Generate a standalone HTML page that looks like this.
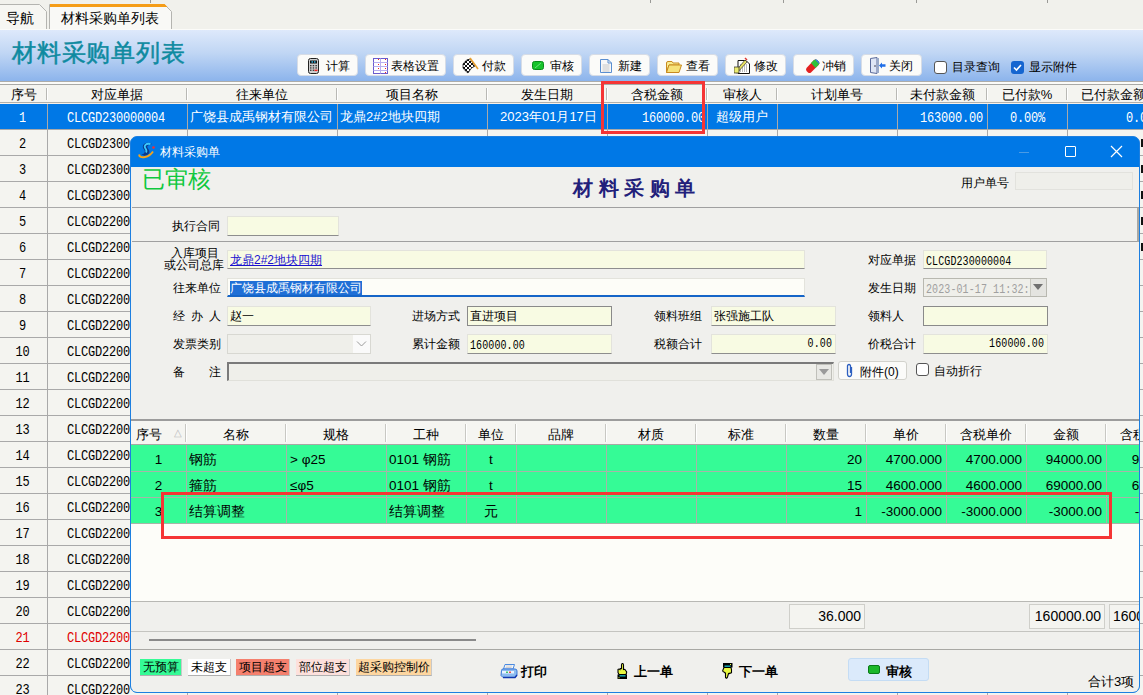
<!DOCTYPE html><html><head><meta charset="utf-8"><style>
*{margin:0;padding:0;box-sizing:border-box}
html,body{width:1143px;height:695px;overflow:hidden;background:#f4f4f0;font-family:"Liberation Sans",sans-serif;font-size:12px;color:#000}
.ab{position:absolute}
.t{position:absolute;white-space:nowrap;line-height:1}
.mono{font-family:"Liberation Mono",monospace}
.sim{position:absolute;white-space:nowrap;line-height:1;font-family:"Liberation Mono",monospace;font-size:12px;letter-spacing:-0.2px;transform:scaleY(1.2);transform-origin:0 0}
.btn{position:absolute;top:54px;height:22px;background:#fbfbf9;border:1px solid #d6dce6;border-radius:4px;font-size:13px;line-height:20px;white-space:nowrap}
.hd{position:absolute;top:84px;height:20px;background:#f4f4f0;font-size:13px;line-height:20px;text-align:center;border-right:1px solid #c9c9c4}
.vl{position:absolute;width:1px;background:#a9a9a9}
.hl{position:absolute;height:1px;background:#a9a9a9}
.inp{position:absolute;background:#f8fbe3;border:1px solid #e3e3dc;border-bottom:1px solid #8e8e8e;font-size:12px;line-height:18px;padding-left:2px;white-space:nowrap;overflow:hidden}
.lbl{position:absolute;font-size:12px;line-height:1;white-space:nowrap}
.gh{position:absolute;top:421px;height:24px;background:#f4f4f0;font-size:13px;line-height:24px;text-align:center}
.gc{position:absolute;font-size:13.5px;line-height:26px;white-space:nowrap;overflow:hidden}
</style></head><body>
<div class="ab" style="left:0;top:0;width:1143px;height:29px;background:#f1f1ec"></div><svg class="ab" style="left:0;top:0" width="180" height="29"><path d="M-1 4.5 H39.5 L46.5 11.5 V29 H-1 Z" fill="#f6f6f2"/><path d="M-1 4.5 H39.5 L46.5 11.5 V29" fill="none" stroke="#b4b4b0" stroke-width="1"/><path d="M49.5 29 V4.5 H164.5 L171.5 11.5 V29 Z" fill="#f9f9f6"/><path d="M49.5 29 V4.5 H164.5 L171.5 11.5 V29" fill="none" stroke="#b4b4b0" stroke-width="1"/><path d="M50 4 H164.5 L167.5 7 H50 Z" fill="#f59d18"/></svg><div class="t" style="left:6px;top:11px;font-size:14px">导航</div><div class="ab" style="left:150px;top:0;width:1px;height:3px;background:#9a9a96"></div><div class="ab" style="left:650px;top:0;width:1px;height:3px;background:#9a9a96"></div><div class="ab" style="left:783px;top:0;width:1px;height:3px;background:#9a9a96"></div><div class="ab" style="left:916px;top:0;width:1px;height:3px;background:#9a9a96"></div><div class="ab" style="left:1047px;top:0;width:1px;height:3px;background:#9a9a96"></div><div class="t" style="left:61px;top:11px;font-size:14px">材料采购单列表</div><div class="ab" style="left:0;top:29px;width:1143px;height:1px;background:#fbfbf8"></div><div class="ab" style="left:0;top:30px;width:1143px;height:51px;background:linear-gradient(#dee9fb,#c0d6f4 45%,#8cb4ec)"></div><div class="ab" style="left:0;top:81px;width:1143px;height:1px;background:#acacaa"></div><div class="ab" style="left:0;top:82px;width:1143px;height:2px;background:#fbfbf9"></div><div class="ab" style="left:0;top:84px;width:1143px;height:1px;background:#a9a9a6"></div><div class="ab" style="left:0;top:85px;width:1143px;height:17px;background:#f4f4f0"></div><div class="ab" style="left:0;top:102px;width:1143px;height:1px;background:#b0b0ac"></div><div class="ab" style="left:0;top:103px;width:1143px;height:1px;background:#f8f0e8"></div><div class="t" style="left:12px;top:41px;font-family:'Liberation Serif',serif;font-size:24px;color:#0e8aa0;font-weight:normal;-webkit-text-stroke:0.5px #0e8aa0;letter-spacing:0.8px">材料采购单列表</div><div class="btn" style="left:297px;width:61px"></div><div class="btn" style="left:365px;width:81px"></div><div class="btn" style="left:453px;width:61px"></div><div class="btn" style="left:521px;width:61px"></div><div class="btn" style="left:589px;width:61px"></div><div class="btn" style="left:657px;width:61px"></div><div class="btn" style="left:725px;width:61px"></div><div class="btn" style="left:793px;width:61px"></div><div class="btn" style="left:861px;width:61px"></div><div class="t" style="left:326px;top:60px;font-size:12px">计算</div><div class="t" style="left:391px;top:60px;font-size:12px">表格设置</div><div class="t" style="left:482px;top:60px;font-size:12px">付款</div><div class="t" style="left:550px;top:60px;font-size:12px">审核</div><div class="t" style="left:618px;top:60px;font-size:12px">新建</div><div class="t" style="left:686px;top:60px;font-size:12px">查看</div><div class="t" style="left:754px;top:60px;font-size:12px">修改</div><div class="t" style="left:822px;top:60px;font-size:12px">冲销</div><div class="t" style="left:889px;top:60px;font-size:12px">关闭</div><svg class="ab" style="left:308px;top:58px" width="11" height="16" viewBox="0 0 11 16"><rect x="0.5" y="0.5" width="10" height="15" rx="2" fill="#cfcfcf" stroke="#222"/><rect x="2" y="2.5" width="7" height="3" fill="#111"/><rect x="3.5" y="3.3" width="1.5" height="1.3" fill="#3cf"/><rect x="6" y="3.3" width="1.5" height="1.3" fill="#3cf"/><g fill="#333"><rect x="2" y="7" width="1.5" height="1.3"/><rect x="4.7" y="7" width="1.5" height="1.3"/><rect x="7.4" y="7" width="1.5" height="1.3"/><rect x="2" y="9.3" width="1.5" height="1.3"/><rect x="4.7" y="9.3" width="1.5" height="1.3"/><rect x="7.4" y="9.3" width="1.5" height="1.3"/><rect x="2" y="11.6" width="1.5" height="1.3"/><rect x="4.7" y="11.6" width="1.5" height="1.3"/></g><rect x="6.5" y="11.6" width="3" height="1.5" fill="#e22"/></svg><svg class="ab" style="left:373px;top:58px" width="15" height="16" viewBox="0 0 15 16"><rect x="0.5" y="0.5" width="14" height="15" fill="#fff" stroke="#6a5acd"/><path d="M7.5 0.5 V15.5 M0.5 4.5 H14.5 M0.5 8.5 H14.5 M0.5 12.5 H14.5" stroke="#b8b0f0" stroke-width="1"/><g fill="#e22"><rect x="5" y="1" width="1" height="1"/><rect x="12" y="1" width="1" height="1"/><rect x="5" y="6" width="1" height="1"/><rect x="12" y="6" width="1" height="1"/><rect x="5" y="10" width="1" height="1"/><rect x="12" y="10" width="1" height="1"/><rect x="12" y="14" width="1" height="1"/></g></svg><svg class="ab" style="left:461px;top:57px" width="18" height="18" viewBox="0 0 18 18"><defs><clipPath id="fc"><path d="M2 7 Q5 2 9 2 L14 9 Q10 10 7 16 Q4 14 2 11 Z"/></clipPath></defs><path d="M2 7 Q5 2 9 2 L14 9 Q10 10 7 16 Q4 14 2 11 Z" fill="#fff" stroke="#222" stroke-width="0.8"/><g clip-path="url(#fc)" fill="#111"><rect x="0" y="0" width="2" height="2"/><rect x="0" y="4" width="2" height="2"/><rect x="0" y="8" width="2" height="2"/><rect x="0" y="12" width="2" height="2"/><rect x="0" y="16" width="2" height="2"/><rect x="2" y="2" width="2" height="2"/><rect x="2" y="6" width="2" height="2"/><rect x="2" y="10" width="2" height="2"/><rect x="2" y="14" width="2" height="2"/><rect x="4" y="0" width="2" height="2"/><rect x="4" y="4" width="2" height="2"/><rect x="4" y="8" width="2" height="2"/><rect x="4" y="12" width="2" height="2"/><rect x="4" y="16" width="2" height="2"/><rect x="6" y="2" width="2" height="2"/><rect x="6" y="6" width="2" height="2"/><rect x="6" y="10" width="2" height="2"/><rect x="6" y="14" width="2" height="2"/><rect x="8" y="0" width="2" height="2"/><rect x="8" y="4" width="2" height="2"/><rect x="8" y="8" width="2" height="2"/><rect x="8" y="12" width="2" height="2"/><rect x="8" y="16" width="2" height="2"/><rect x="10" y="2" width="2" height="2"/><rect x="10" y="6" width="2" height="2"/><rect x="10" y="10" width="2" height="2"/><rect x="10" y="14" width="2" height="2"/><rect x="12" y="0" width="2" height="2"/><rect x="12" y="4" width="2" height="2"/><rect x="12" y="8" width="2" height="2"/><rect x="12" y="12" width="2" height="2"/><rect x="12" y="16" width="2" height="2"/><rect x="14" y="2" width="2" height="2"/><rect x="14" y="6" width="2" height="2"/><rect x="14" y="10" width="2" height="2"/><rect x="14" y="14" width="2" height="2"/><rect x="16" y="0" width="2" height="2"/><rect x="16" y="4" width="2" height="2"/><rect x="16" y="8" width="2" height="2"/><rect x="16" y="12" width="2" height="2"/><rect x="16" y="16" width="2" height="2"/></g><path d="M9 1 L17 12" stroke="#e8a030" stroke-width="1.6"/></svg><svg class="ab" style="left:532px;top:61px" width="12" height="9" viewBox="0 0 12 9"><rect x="0.5" y="0.5" width="11" height="8" rx="2" fill="#16c32a" stroke="#0a8a1a"/><path d="M3 7 L9 2" stroke="#6ee07a" stroke-width="1"/></svg><svg class="ab" style="left:600px;top:59px" width="12" height="14" viewBox="0 0 12 14"><path d="M0.5 0.5 H8 L11.5 4 V13.5 H0.5 Z" fill="#f8f8f8" stroke="#5a8ed0"/><path d="M8 0.5 V4 H11.5" fill="none" stroke="#5a8ed0"/><path d="M2.5 6 H9.5 M2.5 8 H9.5 M2.5 10 H9.5 M2.5 12 H9.5" stroke="#c8c8c8"/></svg><svg class="ab" style="left:666px;top:61px" width="16" height="12" viewBox="0 0 16 12"><path d="M0.5 2 Q0.5 0.5 2 0.5 H6 L7 2 H13 V4 H3 L0.5 11.5 Z" fill="#f8ec90" stroke="#c88a20"/><path d="M0.5 11.5 L3 4 H15.5 L13 11.5 Z" fill="#f6e27a" stroke="#c88a20"/></svg><svg class="ab" style="left:734px;top:57px" width="16" height="17" viewBox="0 0 16 17"><path d="M4 3.5 H12 L15.5 7 V16.5 H4 Z" fill="#fff" stroke="#111"/><path d="M6 8 H13 M6 10 H13 M6 12 H13 M6 14 H13" stroke="#777" stroke-dasharray="1 1"/><path d="M1 15 L11 3 L13 5 L3 16 Z" fill="#e8e060" stroke="#333" stroke-width="0.7"/><rect x="0" y="10" width="5" height="6" fill="#ecec70" stroke="#222" stroke-width="0.7"/><path d="M11 1 L13 3" stroke="#d33" stroke-width="1.5"/></svg><svg class="ab" style="left:805px;top:58px" width="15" height="16" viewBox="0 0 15 16"><path d="M1.5 10 L9 2 Q10.5 0.8 12 2 L14 4 Q15 5.5 13.5 7 L6 14.5 Q4.5 15.5 3 14.5 L1.5 13 Q0.5 11.5 1.5 10 Z" fill="#e32020"/><path d="M6 5 L9 2 Q10.5 0.8 12 2 L14 4 Q15 5.5 13.5 7 L10.5 10 Z" fill="#2fc03a"/><path d="M10 1.5 Q10.5 0.8 12 1.8 L14.2 4 Q14.8 5 14 6 Z" fill="#3a7ae0"/></svg><svg class="ab" style="left:870px;top:57px" width="16" height="17" viewBox="0 0 16 17"><path d="M0.5 1.5 L7 0.5 V16.5 L0.5 15.5 Z" fill="#dfe6f5" stroke="#5a6a9a"/><rect x="7" y="1" width="2" height="15" fill="#9aaac8"/><path d="M9 8.5 L12 5.5 V7.3 H15.5 V9.7 H12 V11.5 Z" fill="#1e6ee8"/><circle cx="5" cy="9" r="0.8" fill="#334"/></svg><div class="ab" style="left:934px;top:61px;width:13px;height:13px;border:1px solid #555;border-radius:3px;background:#fff"></div><div class="t" style="left:952px;top:61px;font-size:12px">目录查询</div><div class="ab" style="left:1011px;top:61px;width:13px;height:13px;border-radius:3px;background:#1565d0"></div><svg class="ab" style="left:1011px;top:61px" width="13" height="13"><path d="M3 6.5 L5.5 9 L10 4" stroke="#fff" stroke-width="1.6" fill="none"/></svg><div class="t" style="left:1029px;top:61px;font-size:12px">显示附件</div><div class="t" style="left:0px;top:88px;width:47px;text-align:center;font-size:13px">序号</div><div class="t" style="left:47px;top:88px;width:140px;text-align:center;font-size:13px">对应单据</div><div class="ab" style="left:46px;top:88px;width:1px;height:12px;background:#b8b8b4"></div><div class="ab" style="left:47px;top:88px;width:1px;height:12px;background:#fff"></div><div class="t" style="left:187px;top:88px;width:150px;text-align:center;font-size:13px">往来单位</div><div class="ab" style="left:186px;top:88px;width:1px;height:12px;background:#b8b8b4"></div><div class="ab" style="left:187px;top:88px;width:1px;height:12px;background:#fff"></div><div class="t" style="left:337px;top:88px;width:150px;text-align:center;font-size:13px">项目名称</div><div class="ab" style="left:336px;top:88px;width:1px;height:12px;background:#b8b8b4"></div><div class="ab" style="left:337px;top:88px;width:1px;height:12px;background:#fff"></div><div class="t" style="left:487px;top:88px;width:120px;text-align:center;font-size:13px">发生日期</div><div class="ab" style="left:486px;top:88px;width:1px;height:12px;background:#b8b8b4"></div><div class="ab" style="left:487px;top:88px;width:1px;height:12px;background:#fff"></div><div class="t" style="left:607px;top:88px;width:100px;text-align:center;font-size:13px">含税金额</div><div class="ab" style="left:606px;top:88px;width:1px;height:12px;background:#b8b8b4"></div><div class="ab" style="left:607px;top:88px;width:1px;height:12px;background:#fff"></div><div class="t" style="left:707px;top:88px;width:70px;text-align:center;font-size:13px">审核人</div><div class="ab" style="left:706px;top:88px;width:1px;height:12px;background:#b8b8b4"></div><div class="ab" style="left:707px;top:88px;width:1px;height:12px;background:#fff"></div><div class="t" style="left:777px;top:88px;width:120px;text-align:center;font-size:13px">计划单号</div><div class="ab" style="left:776px;top:88px;width:1px;height:12px;background:#b8b8b4"></div><div class="ab" style="left:777px;top:88px;width:1px;height:12px;background:#fff"></div><div class="t" style="left:897px;top:88px;width:90px;text-align:center;font-size:13px">未付款金额</div><div class="ab" style="left:896px;top:88px;width:1px;height:12px;background:#b8b8b4"></div><div class="ab" style="left:897px;top:88px;width:1px;height:12px;background:#fff"></div><div class="t" style="left:987px;top:88px;width:80px;text-align:center;font-size:13px">已付款%</div><div class="ab" style="left:986px;top:88px;width:1px;height:12px;background:#b8b8b4"></div><div class="ab" style="left:987px;top:88px;width:1px;height:12px;background:#fff"></div><div class="t" style="left:1067px;top:88px;width:93px;text-align:center;font-size:13px">已付款金额</div><div class="ab" style="left:1066px;top:88px;width:1px;height:12px;background:#b8b8b4"></div><div class="ab" style="left:1067px;top:88px;width:1px;height:12px;background:#fff"></div><div class="ab" style="left:0;top:104px;width:1143px;height:25px;background:#0078e6"></div><div class="hl" style="left:0;top:129px;width:1143px"></div><div class="hl" style="left:0;top:155px;width:1143px"></div><div class="hl" style="left:0;top:181px;width:1143px"></div><div class="hl" style="left:0;top:207px;width:1143px"></div><div class="hl" style="left:0;top:233px;width:1143px"></div><div class="hl" style="left:0;top:259px;width:1143px"></div><div class="hl" style="left:0;top:285px;width:1143px"></div><div class="hl" style="left:0;top:311px;width:1143px"></div><div class="hl" style="left:0;top:337px;width:1143px"></div><div class="hl" style="left:0;top:363px;width:1143px"></div><div class="hl" style="left:0;top:389px;width:1143px"></div><div class="hl" style="left:0;top:415px;width:1143px"></div><div class="hl" style="left:0;top:441px;width:1143px"></div><div class="hl" style="left:0;top:467px;width:1143px"></div><div class="hl" style="left:0;top:493px;width:1143px"></div><div class="hl" style="left:0;top:519px;width:1143px"></div><div class="hl" style="left:0;top:545px;width:1143px"></div><div class="hl" style="left:0;top:571px;width:1143px"></div><div class="hl" style="left:0;top:597px;width:1143px"></div><div class="hl" style="left:0;top:623px;width:1143px"></div><div class="hl" style="left:0;top:649px;width:1143px"></div><div class="hl" style="left:0;top:675px;width:1143px"></div><div class="hl" style="left:0;top:701px;width:1143px"></div><div class="vl" style="left:47px;top:104px;height:591px"></div><div class="vl" style="left:187px;top:104px;height:591px"></div><div class="vl" style="left:337px;top:104px;height:591px"></div><div class="vl" style="left:487px;top:104px;height:591px"></div><div class="vl" style="left:607px;top:104px;height:591px"></div><div class="vl" style="left:707px;top:104px;height:591px"></div><div class="vl" style="left:777px;top:104px;height:591px"></div><div class="vl" style="left:897px;top:104px;height:591px"></div><div class="vl" style="left:987px;top:104px;height:591px"></div><div class="vl" style="left:1067px;top:104px;height:591px"></div><div class="sim" style="left:-1px;top:111px;width:47px;text-align:center;color:#fff">1</div><div class="sim" style="left:67px;top:111px;color:#fff">CLCGD230000004</div><div class="sim" style="left:-1px;top:137px;width:47px;text-align:center;color:#000">2</div><div class="sim" style="left:67px;top:137px;color:#000">CLCGD2300</div><div class="sim" style="left:-1px;top:163px;width:47px;text-align:center;color:#000">3</div><div class="sim" style="left:67px;top:163px;color:#000">CLCGD2300</div><div class="sim" style="left:-1px;top:189px;width:47px;text-align:center;color:#000">4</div><div class="sim" style="left:67px;top:189px;color:#000">CLCGD2300</div><div class="sim" style="left:-1px;top:215px;width:47px;text-align:center;color:#000">5</div><div class="sim" style="left:67px;top:215px;color:#000">CLCGD2200</div><div class="sim" style="left:-1px;top:241px;width:47px;text-align:center;color:#000">6</div><div class="sim" style="left:67px;top:241px;color:#000">CLCGD2200</div><div class="sim" style="left:-1px;top:267px;width:47px;text-align:center;color:#000">7</div><div class="sim" style="left:67px;top:267px;color:#000">CLCGD2200</div><div class="sim" style="left:-1px;top:293px;width:47px;text-align:center;color:#000">8</div><div class="sim" style="left:67px;top:293px;color:#000">CLCGD2200</div><div class="sim" style="left:-1px;top:319px;width:47px;text-align:center;color:#000">9</div><div class="sim" style="left:67px;top:319px;color:#000">CLCGD2200</div><div class="sim" style="left:-1px;top:345px;width:47px;text-align:center;color:#000">10</div><div class="sim" style="left:67px;top:345px;color:#000">CLCGD2200</div><div class="sim" style="left:-1px;top:371px;width:47px;text-align:center;color:#000">11</div><div class="sim" style="left:67px;top:371px;color:#000">CLCGD2200</div><div class="sim" style="left:-1px;top:397px;width:47px;text-align:center;color:#000">12</div><div class="sim" style="left:67px;top:397px;color:#000">CLCGD2200</div><div class="sim" style="left:-1px;top:423px;width:47px;text-align:center;color:#000">13</div><div class="sim" style="left:67px;top:423px;color:#000">CLCGD2200</div><div class="sim" style="left:-1px;top:449px;width:47px;text-align:center;color:#000">14</div><div class="sim" style="left:67px;top:449px;color:#000">CLCGD2200</div><div class="sim" style="left:-1px;top:475px;width:47px;text-align:center;color:#000">15</div><div class="sim" style="left:67px;top:475px;color:#000">CLCGD2200</div><div class="sim" style="left:-1px;top:501px;width:47px;text-align:center;color:#000">16</div><div class="sim" style="left:67px;top:501px;color:#000">CLCGD2200</div><div class="sim" style="left:-1px;top:527px;width:47px;text-align:center;color:#000">17</div><div class="sim" style="left:67px;top:527px;color:#000">CLCGD2200</div><div class="sim" style="left:-1px;top:553px;width:47px;text-align:center;color:#000">18</div><div class="sim" style="left:67px;top:553px;color:#000">CLCGD2200</div><div class="sim" style="left:-1px;top:579px;width:47px;text-align:center;color:#000">19</div><div class="sim" style="left:67px;top:579px;color:#000">CLCGD2200</div><div class="sim" style="left:-1px;top:605px;width:47px;text-align:center;color:#000">20</div><div class="sim" style="left:67px;top:605px;color:#000">CLCGD2200</div><div class="sim" style="left:-1px;top:631px;width:47px;text-align:center;color:#e00000">21</div><div class="sim" style="left:67px;top:631px;color:#e00000">CLCGD2200</div><div class="sim" style="left:-1px;top:657px;width:47px;text-align:center;color:#000">22</div><div class="sim" style="left:67px;top:657px;color:#000">CLCGD2200</div><div class="sim" style="left:-1px;top:683px;width:47px;text-align:center;color:#000">23</div><div class="sim" style="left:67px;top:683px;color:#000">CLCGD2200</div><div class="t" style="left:190px;top:110px;font-size:13px;color:#fff">广饶县成禹钢材有限公司</div><div class="t" style="left:340px;top:110px;font-size:13px;color:#fff">龙鼎2#2地块四期</div><div class="t" style="left:500px;top:110px;font-size:13px;color:#fff">2023年01月17日</div><div class="sim" style="left:642px;top:111px;color:#fff">160000.00</div><div class="t" style="left:716px;top:110px;font-size:13px;color:#fff">超级用户</div><div class="sim" style="left:920px;top:111px;color:#fff">163000.00</div><div class="sim" style="left:1010px;top:111px;color:#fff">0.00%</div><div class="sim" style="left:1126px;top:111px;color:#fff">0.0</div><div class="ab" style="left:1141px;top:139px;width:2px;height:8px;background:#111"></div><div class="ab" style="left:1141px;top:165px;width:2px;height:8px;background:#111"></div><div class="ab" style="left:1141px;top:191px;width:2px;height:8px;background:#111"></div><div class="ab" style="left:1141px;top:217px;width:2px;height:8px;background:#111"></div><div class="ab" style="left:1141px;top:243px;width:2px;height:8px;background:#111"></div><div class="ab" style="left:601px;top:81px;width:104px;height:53px;border:3px solid #f53535"></div><div class="ab" style="left:130px;top:136px;width:1010px;height:557px;background:#0078e6;border:1px solid #1d7fe0;border-radius:7px;overflow:hidden"><div class="ab" style="left:0;top:30px;width:1008px;height:525px;background:#f0f0ed"></div><div class="ab" style="left:0;top:0;width:1008px;height:30px;background:#0078e6"></div><div class="t" style="left:29px;top:9px;font-size:12px;color:#fff">材料采购单</div><svg class="ab" style="left:7px;top:5px" width="18" height="17"><path d="M14 2 Q9.5 -0.5 6 2 Q3.5 4.5 6 7.5 Q7.5 9.5 6 11.5 Q4.5 12.5 3 12 Q7 15.5 10.5 12 Q12.5 9.5 10 6.5 Q8.5 4.5 10 3.5 Q11.5 2.5 14 2 Z" fill="#0b3a8c"/><path d="M12.5 2.2 Q9.5 1 7.5 2.8 Q6 4.5 7.5 6.5 Q9 8.5 8 10.5" stroke="#3cc8fa" stroke-width="1.8" fill="none"/><path d="M1 12.5 Q1.5 16 7 15 Q12 14 15 9.5" stroke="#f5a41a" stroke-width="1.9" fill="none"/><circle cx="15.5" cy="5.5" r="1.3" fill="#ff2a2a"/></svg><div class="ab" style="left:888px;top:15px;width:10px;height:1px;background:#4a9be5"></div><div class="ab" style="left:934px;top:9px;width:11px;height:11px;border:1.3px solid #fff;border-radius:1px"></div><svg class="ab" style="left:979px;top:8px" width="13" height="13"><path d="M1 1 L12 12 M12 1 L1 12" stroke="#fff" stroke-width="1.2"/></svg><div class="t" style="left:11px;top:31px;font-size:23px;color:#0fc83e">已审核</div><div class="t" style="left:442px;top:41px;font-family:'Liberation Serif',serif;font-size:20px;font-weight:bold;color:#22207a;letter-spacing:5.5px">材料采购单</div><div class="lbl" style="left:830px;top:40px">用户单号</div><div class="ab" style="left:884px;top:35px;width:118px;height:18px;border:1px solid #e2e2dd;background:#efefea"></div><div class="ab" style="left:1px;top:70px;width:1008px;height:1px;background:#a0a0a0"></div><div class="lbl" style="left:41px;top:83px">执行合同</div><div class="inp" style="left:96px;top:79px;width:112px;height:20px"></div><div class="ab" style="left:1px;top:104px;width:1008px;height:1px;background:#a0a0a0"></div><div class="ab" style="left:1006px;top:71px;width:2px;height:34px;background:#a8a8a4"></div><div class="lbl" style="left:40px;top:110px;">入库项目</div><div class="lbl" style="left:33px;top:122px;">或公司总库</div><div class="inp" style="left:96px;top:113px;width:578px;height:19px;"><span style="color:#1a10d0;text-decoration:underline">龙鼎2#2地块四期</span></div><div class="lbl" style="left:42px;top:145px;">往来单位</div><div class="inp" style="left:96px;top:141px;width:578px;height:19px;background:#fdfdf8;border-bottom:2px solid #1565c8"><span style="background:#1f6fd6;color:#fff">广饶县成禹钢材有限公司</span></div><div class="lbl" style="left:42px;top:173px;letter-spacing:6px">经办人</div><div class="inp" style="left:96px;top:169px;width:144px;height:20px;">赵一</div><div class="lbl" style="left:281px;top:173px;">进场方式</div><div class="inp" style="left:336px;top:169px;width:145px;height:20px;border:1px solid #8a8a8a">直进项目</div><div class="lbl" style="left:523px;top:173px;">领料班组</div><div class="inp" style="left:580px;top:169px;width:125px;height:20px;">张强施工队</div><div class="lbl" style="left:737px;top:173px;">领料人</div><div class="inp" style="left:792px;top:169px;width:125px;height:20px;border:1px solid #8a8a8a"></div><div class="lbl" style="left:42px;top:201px;">发票类别</div><div class="inp" style="left:96px;top:197px;width:144px;height:20px;background:#efefea;border:1px solid #d8d8d2"></div><div class="ab" style="left:222px;top:198px;width:17px;height:18px;background:#fafafa"></div><svg class="ab" style="left:225px;top:203px" width="11" height="8"><path d="M1 1.5 L5.5 6 L10 1.5" stroke="#9a9a9a" fill="none"/></svg><div class="lbl" style="left:281px;top:201px;">累计金额</div><div class="inp" style="left:336px;top:197px;width:145px;height:20px;"><span class="mono" style="display:inline-block;transform:scaleY(1.25);transform-origin:0 40%;letter-spacing:0.1px;font-size:10px">160000.00</span></div><div class="lbl" style="left:523px;top:201px;">税额合计</div><div class="inp" style="left:580px;top:197px;width:125px;height:20px;"><span class="mono" style="display:inline-block;transform:scaleY(1.25);transform-origin:0 40%;letter-spacing:0.1px;font-size:10px;float:right;padding-right:3px">0.00</span></div><div class="lbl" style="left:737px;top:201px;">价税合计</div><div class="inp" style="left:792px;top:197px;width:125px;height:20px;"><span class="mono" style="display:inline-block;transform:scaleY(1.25);transform-origin:0 40%;letter-spacing:0.1px;font-size:10px;float:right;padding-right:3px">160000.00</span></div><div class="lbl" style="left:737px;top:117px;">对应单据</div><div class="inp" style="left:792px;top:113px;width:124px;height:19px;"><span class="mono" style="display:inline-block;transform:scaleY(1.25);transform-origin:0 40%;letter-spacing:0.1px;font-size:10px">CLCGD230000004</span></div><div class="lbl" style="left:737px;top:145px;">发生日期</div><div class="inp" style="left:792px;top:141px;width:124px;height:19px;background:#efefea;border:1px solid #b8b8b0"><span class="mono" style="display:inline-block;transform:scaleY(1.25);transform-origin:0 40%;letter-spacing:0.1px;font-size:10px;color:#a0a0a0">2023-01-17 11:32:0</span></div><div class="ab" style="left:899px;top:142px;width:16px;height:17px;background:#e4e4e0;border-left:1px solid #c8c8c0"></div><svg class="ab" style="left:902px;top:147px" width="10" height="7"><path d="M0 0 L10 0 L5 6 Z" fill="#707070"/></svg><div class="lbl" style="left:42px;top:229px;">备　　注</div><div class="inp" style="left:96px;top:225px;width:607px;height:19px;background:#efefea;border:1px solid #e0e0da;border-left:2px solid #7a7a7a;border-top:2px solid #7a7a7a"></div><div class="ab" style="left:685px;top:227px;width:16px;height:16px;background:#e8e8e4;border:1px solid #c0c0ba"></div><svg class="ab" style="left:688px;top:232px" width="10" height="7"><path d="M0 0 L10 0 L5 6 Z" fill="#9a9a9a"/></svg><div class="ab" style="left:707px;top:224px;width:69px;height:19px;background:#fbfbf9;border:1px solid #d2d2cc;border-radius:3px"></div><svg class="ab" style="left:714px;top:226px" width="9" height="15"><path d="M6.5 4 L6.5 11 Q6.5 13.5 4.5 13.5 Q2.5 13.5 2.5 11 L2.5 3 Q2.5 1.5 4 1.5 Q5.5 1.5 5.5 3 L5.5 10" stroke="#2c5fc0" stroke-width="1.3" fill="none"/></svg><div class="lbl" style="left:729px;top:229px;">附件(0)</div><div class="ab" style="left:785px;top:226px;width:13px;height:13px;border:1px solid #555;border-radius:3px;background:#fff"></div><div class="lbl" style="left:803px;top:228px;">自动折行</div><div class="ab" style="left:0;top:282px;width:1008px;height:2px;background:#9c9c9c"></div><div class="ab" style="left:0;top:284px;width:1008px;height:23px;background:#f5f5f1"></div><div class="ab" style="left:0;top:307px;width:1008px;height:1px;background:#a8a8a4"></div><div class="ab" style="left:0;top:308px;width:1008px;height:79px;background:#35fb96"></div><div class="ab" style="left:0;top:387px;width:1008px;height:77px;background:#fdfdf9"></div><div class="t" style="left:5px;top:291px;font-size:13px">序号</div><div class="t" style="left:43px;top:291px;font-size:10px;color:#bbb">△</div><div class="t" style="left:55px;top:291px;width:100px;text-align:center;font-size:13px">名称</div><div class="ab" style="left:54px;top:287px;width:1px;height:18px;background:#c8c8c3"></div><div class="ab" style="left:55px;top:287px;width:1px;height:18px;background:#fff"></div><div class="ab" style="left:55px;top:308px;width:1px;height:79px;background:#a8b4a8"></div><div class="t" style="left:155px;top:291px;width:100px;text-align:center;font-size:13px">规格</div><div class="ab" style="left:154px;top:287px;width:1px;height:18px;background:#c8c8c3"></div><div class="ab" style="left:155px;top:287px;width:1px;height:18px;background:#fff"></div><div class="ab" style="left:155px;top:308px;width:1px;height:79px;background:#a8b4a8"></div><div class="t" style="left:255px;top:291px;width:80px;text-align:center;font-size:13px">工种</div><div class="ab" style="left:254px;top:287px;width:1px;height:18px;background:#c8c8c3"></div><div class="ab" style="left:255px;top:287px;width:1px;height:18px;background:#fff"></div><div class="ab" style="left:255px;top:308px;width:1px;height:79px;background:#a8b4a8"></div><div class="t" style="left:335px;top:291px;width:50px;text-align:center;font-size:13px">单位</div><div class="ab" style="left:334px;top:287px;width:1px;height:18px;background:#c8c8c3"></div><div class="ab" style="left:335px;top:287px;width:1px;height:18px;background:#fff"></div><div class="ab" style="left:335px;top:308px;width:1px;height:79px;background:#a8b4a8"></div><div class="t" style="left:385px;top:291px;width:90px;text-align:center;font-size:13px">品牌</div><div class="ab" style="left:384px;top:287px;width:1px;height:18px;background:#c8c8c3"></div><div class="ab" style="left:385px;top:287px;width:1px;height:18px;background:#fff"></div><div class="ab" style="left:385px;top:308px;width:1px;height:79px;background:#a8b4a8"></div><div class="t" style="left:475px;top:291px;width:90px;text-align:center;font-size:13px">材质</div><div class="ab" style="left:474px;top:287px;width:1px;height:18px;background:#c8c8c3"></div><div class="ab" style="left:475px;top:287px;width:1px;height:18px;background:#fff"></div><div class="ab" style="left:475px;top:308px;width:1px;height:79px;background:#a8b4a8"></div><div class="t" style="left:565px;top:291px;width:90px;text-align:center;font-size:13px">标准</div><div class="ab" style="left:564px;top:287px;width:1px;height:18px;background:#c8c8c3"></div><div class="ab" style="left:565px;top:287px;width:1px;height:18px;background:#fff"></div><div class="ab" style="left:565px;top:308px;width:1px;height:79px;background:#a8b4a8"></div><div class="t" style="left:655px;top:291px;width:80px;text-align:center;font-size:13px">数量</div><div class="ab" style="left:654px;top:287px;width:1px;height:18px;background:#c8c8c3"></div><div class="ab" style="left:655px;top:287px;width:1px;height:18px;background:#fff"></div><div class="ab" style="left:655px;top:308px;width:1px;height:79px;background:#a8b4a8"></div><div class="t" style="left:735px;top:291px;width:80px;text-align:center;font-size:13px">单价</div><div class="ab" style="left:734px;top:287px;width:1px;height:18px;background:#c8c8c3"></div><div class="ab" style="left:735px;top:287px;width:1px;height:18px;background:#fff"></div><div class="ab" style="left:735px;top:308px;width:1px;height:79px;background:#a8b4a8"></div><div class="t" style="left:815px;top:291px;width:80px;text-align:center;font-size:13px">含税单价</div><div class="ab" style="left:814px;top:287px;width:1px;height:18px;background:#c8c8c3"></div><div class="ab" style="left:815px;top:287px;width:1px;height:18px;background:#fff"></div><div class="ab" style="left:815px;top:308px;width:1px;height:79px;background:#a8b4a8"></div><div class="t" style="left:895px;top:291px;width:80px;text-align:center;font-size:13px">金额</div><div class="ab" style="left:894px;top:287px;width:1px;height:18px;background:#c8c8c3"></div><div class="ab" style="left:895px;top:287px;width:1px;height:18px;background:#fff"></div><div class="ab" style="left:895px;top:308px;width:1px;height:79px;background:#a8b4a8"></div><div class="t" style="left:975px;top:291px;width:80px;text-align:center;font-size:13px">含税金额</div><div class="ab" style="left:974px;top:287px;width:1px;height:18px;background:#c8c8c3"></div><div class="ab" style="left:975px;top:287px;width:1px;height:18px;background:#fff"></div><div class="ab" style="left:975px;top:308px;width:1px;height:79px;background:#a8b4a8"></div><div class="ab" style="left:0;top:334px;width:1008px;height:1px;background:#a8b4a8"></div><div class="ab" style="left:0;top:360px;width:1008px;height:1px;background:#a8b4a8"></div><div class="ab" style="left:0;top:386px;width:1008px;height:1px;background:#a8b4a8"></div><div class="gc" style="left:0;top:310px;width:55px;text-align:center">1</div><div class="gc" style="left:58px;top:310px">钢筋</div><div class="gc" style="left:159px;top:310px">&gt; φ25</div><div class="gc" style="left:258px;top:310px">0101 钢筋</div><div class="gc" style="left:335px;top:310px;width:50px;text-align:center">t</div><div class="gc" style="left:655px;top:310px;width:76px;text-align:right">20</div><div class="gc" style="left:735px;top:310px;width:76px;text-align:right">4700.000</div><div class="gc" style="left:815px;top:310px;width:76px;text-align:right">4700.000</div><div class="gc" style="left:895px;top:310px;width:76px;text-align:right">94000.00</div><div class="gc" style="left:975px;top:310px;width:82px;text-align:right">94000.00</div><div class="gc" style="left:0;top:336px;width:55px;text-align:center">2</div><div class="gc" style="left:58px;top:336px">箍筋</div><div class="gc" style="left:159px;top:336px">≤φ5</div><div class="gc" style="left:258px;top:336px">0101 钢筋</div><div class="gc" style="left:335px;top:336px;width:50px;text-align:center">t</div><div class="gc" style="left:655px;top:336px;width:76px;text-align:right">15</div><div class="gc" style="left:735px;top:336px;width:76px;text-align:right">4600.000</div><div class="gc" style="left:815px;top:336px;width:76px;text-align:right">4600.000</div><div class="gc" style="left:895px;top:336px;width:76px;text-align:right">69000.00</div><div class="gc" style="left:975px;top:336px;width:82px;text-align:right">69000.00</div><div class="gc" style="left:0;top:362px;width:55px;text-align:center">3</div><div class="gc" style="left:58px;top:362px">结算调整</div><div class="gc" style="left:159px;top:362px"></div><div class="gc" style="left:258px;top:362px">结算调整</div><div class="gc" style="left:335px;top:362px;width:50px;text-align:center">元</div><div class="gc" style="left:655px;top:362px;width:76px;text-align:right">1</div><div class="gc" style="left:735px;top:362px;width:76px;text-align:right">-3000.000</div><div class="gc" style="left:815px;top:362px;width:76px;text-align:right">-3000.000</div><div class="gc" style="left:895px;top:362px;width:76px;text-align:right">-3000.00</div><div class="gc" style="left:975px;top:362px;width:82px;text-align:right">-3000.00</div><div class="ab" style="left:30px;top:355px;width:951px;height:47px;border:3px solid #f53535"></div><div class="ab" style="left:0;top:464px;width:1008px;height:1px;background:#b8b8b4"></div><div class="ab" style="left:658px;top:467px;width:76px;height:25px;border:1px solid #cfcfca;background:#f4f4f0;font-size:14px;line-height:23px;text-align:right;padding-right:3px">36.000</div><div class="ab" style="left:898px;top:467px;width:76px;height:25px;border:1px solid #cfcfca;background:#f4f4f0;font-size:14px;line-height:23px;text-align:right;padding-right:3px">160000.00</div><div class="ab" style="left:978px;top:467px;width:60px;height:25px;border:1px solid #cfcfca;background:#f4f4f0;font-size:14px;line-height:23px;padding-left:3px">160000.00</div><div class="ab" style="left:0;top:494px;width:1008px;height:1px;background:#c4c4c0"></div><div class="ab" style="left:18px;top:502px;width:327px;height:2px;background:#8a8a8a"></div><div class="ab" style="left:0;top:512px;width:1008px;height:1px;background:#a8a8a4"></div><div class="ab" style="left:9px;top:522px;width:42px;height:17px;background:#35fb96;border-bottom:1px solid #b0b0b0;border-right:1px solid #c8c8c8;font-size:12px;line-height:17px;text-align:center;white-space:nowrap">无预算</div><div class="ab" style="left:57px;top:522px;width:43px;height:17px;background:#ffffff;border-bottom:1px solid #b0b0b0;border-right:1px solid #c8c8c8;font-size:12px;line-height:17px;text-align:center;white-space:nowrap">未超支</div><div class="ab" style="left:105px;top:522px;width:54px;height:17px;background:#f5806e;border-bottom:1px solid #b0b0b0;border-right:1px solid #c8c8c8;font-size:12px;line-height:17px;text-align:center;white-space:nowrap">项目超支</div><div class="ab" style="left:165px;top:522px;width:54px;height:17px;background:#fde0dc;border-bottom:1px solid #b0b0b0;border-right:1px solid #c8c8c8;font-size:12px;line-height:17px;text-align:center;white-space:nowrap">部位超支</div><div class="ab" style="left:225px;top:522px;width:76px;height:17px;background:#fdd6a0;border-bottom:1px solid #b0b0b0;border-right:1px solid #c8c8c8;font-size:12px;line-height:17px;text-align:center;white-space:nowrap">超采购控制价</div><div class="t" style="left:390px;top:528px;font-size:13px;font-weight:bold">打印</div><svg class="ab" style="left:369px;top:526px" width="18" height="16"><path d="M5 1.5 H14.5 L13 6 H3.5 Z" fill="#f4f6fa" stroke="#4a8ae0" stroke-width="1"/><path d="M6 3 H12 M5.5 4.5 H11.5" stroke="#c8c8c8" stroke-width="0.8"/><path d="M1.5 7.5 Q1.5 6 3 6 H15 Q17 6 17 8 V12 L15 14.5 H3 L1 12.5 Z" fill="#8cbcf0" stroke="#3a78d8" stroke-width="1"/><rect x="2" y="8" width="12" height="2.5" fill="#eaf4ff"/><path d="M3 14.5 H15 L17 12" stroke="#1038b0" stroke-width="1.5" fill="none"/><rect x="6" y="8.6" width="2" height="1.2" fill="#1db84a"/><rect x="9" y="8.6" width="2" height="1.2" fill="#e02828"/></svg><div class="t" style="left:503px;top:528px;font-size:13px;font-weight:bold">上一单</div><svg class="ab" style="left:486px;top:526px" width="11" height="16"><path d="M5.5 0.5 Q6.5 0.5 6.5 2 V6.5 Q8.5 6 9 8 Q10 8.5 9.5 10 L9 11.5 H2 L1 9.5 V6.5 Q2 5.5 3 6.5 Q3.5 5 4.5 5.5 V2 Q4.5 0.5 5.5 0.5 Z" fill="#e8f840" stroke="#000" stroke-width="1.1"/><rect x="0.5" y="11.5" width="9.5" height="4.5" fill="#000"/><rect x="2.5" y="12.3" width="6" height="1.1" fill="#1ee0f0"/><rect x="1.5" y="14.2" width="1" height="1" fill="#e8f840"/></svg><div class="t" style="left:608px;top:528px;font-size:13px;font-weight:bold">下一单</div><svg class="ab" style="left:591px;top:526px" width="11" height="16"><rect x="1" y="0" width="9.5" height="4.5" fill="#000"/><rect x="2.5" y="2.6" width="6" height="1.1" fill="#1ee0f0"/><rect x="8" y="1" width="1" height="1" fill="#e8f840"/><path d="M2 4.5 H9 L9.5 6.5 V9.5 Q9 10.5 8 10 Q7.5 11 6.5 10.5 L5.5 14 Q5 15.5 4 15 Q3.3 14.5 3.5 13.5 V10 Q2.5 10 2 9 Q0.7 9 0.7 7.5 Z" fill="#e8f840" stroke="#000" stroke-width="1.1"/></svg><div class="ab" style="left:717px;top:521px;width:81px;height:23px;background:#dbeafb;border:1px solid #c4dcf4;border-radius:3px"></div><div class="ab" style="left:737px;top:528px;width:12px;height:9px;background:#1cb82a;border:1px solid #0a7a18;border-radius:2px"></div><div class="t" style="left:755px;top:528px;font-size:13px;font-weight:bold">审核</div><div class="t" style="left:957px;top:538px;font-size:13px">合计3项</div></div></body></html>
